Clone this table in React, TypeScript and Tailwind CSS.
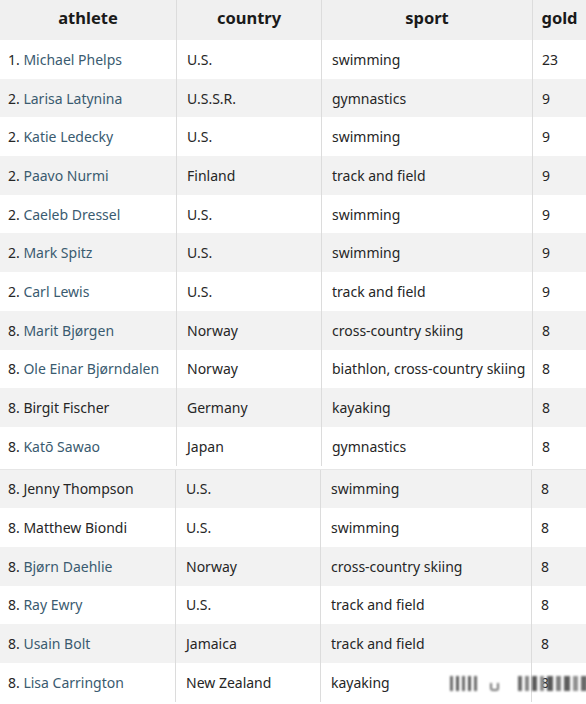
import React from 'react';

type Row = { rank: string; name: string; link: boolean; country: string; sport: string; gold: string };

const top: Row[] = [
  { rank: '1.', name: 'Michael Phelps', link: true, country: 'U.S.', sport: 'swimming', gold: '23' },
  { rank: '2.', name: 'Larisa Latynina', link: true, country: 'U.S.S.R.', sport: 'gymnastics', gold: '9' },
  { rank: '2.', name: 'Katie Ledecky', link: true, country: 'U.S.', sport: 'swimming', gold: '9' },
  { rank: '2.', name: 'Paavo Nurmi', link: true, country: 'Finland', sport: 'track and field', gold: '9' },
  { rank: '2.', name: 'Caeleb Dressel', link: true, country: 'U.S.', sport: 'swimming', gold: '9' },
  { rank: '2.', name: 'Mark Spitz', link: true, country: 'U.S.', sport: 'swimming', gold: '9' },
  { rank: '2.', name: 'Carl Lewis', link: true, country: 'U.S.', sport: 'track and field', gold: '9' },
  { rank: '8.', name: 'Marit Bjørgen', link: true, country: 'Norway', sport: 'cross-country skiing', gold: '8' },
  { rank: '8.', name: 'Ole Einar Bjørndalen', link: true, country: 'Norway', sport: 'biathlon, cross-country skiing', gold: '8' },
  { rank: '8.', name: 'Birgit Fischer', link: false, country: 'Germany', sport: 'kayaking', gold: '8' },
  { rank: '8.', name: 'Katō Sawao', link: true, country: 'Japan', sport: 'gymnastics', gold: '8' },
];

const bottom: Row[] = [
  { rank: '8.', name: 'Jenny Thompson', link: false, country: 'U.S.', sport: 'swimming', gold: '8' },
  { rank: '8.', name: 'Matthew Biondi', link: false, country: 'U.S.', sport: 'swimming', gold: '8' },
  { rank: '8.', name: 'Bjørn Daehlie', link: true, country: 'Norway', sport: 'cross-country skiing', gold: '8' },
  { rank: '8.', name: 'Ray Ewry', link: true, country: 'U.S.', sport: 'track and field', gold: '8' },
  { rank: '8.', name: 'Usain Bolt', link: true, country: 'Jamaica', sport: 'track and field', gold: '8' },
  { rank: '8.', name: 'Lisa Carrington', link: true, country: 'New Zealand', sport: 'kayaking', gold: '8' },
];

const TableRow = ({ row, shaded, shift }: { row: Row; shaded: boolean; shift?: boolean }) => (
  <div
    className={`grid h-[38.7px] items-center text-[14px] text-[#262626] ${shaded ? 'bg-[#f2f2f2]' : 'bg-white'} ${
      shift ? 'grid-cols-[175px_145px_211px_55px]' : 'grid-cols-[176px_145px_211px_54px]'
    }`}
  >
    <div className="pl-2 whitespace-nowrap">
      <span>{row.rank} </span>
      <span className={row.link ? 'text-[#3a5b70]' : ''}>{row.name}</span>
    </div>
    <div className="h-full flex items-center pl-[10px] border-l border-[#dcdcdc]">{row.country}</div>
    <div className="h-full flex items-center pl-[10px] border-l border-[#dcdcdc] whitespace-nowrap">{row.sport}</div>
    <div className="h-full flex items-center pl-[9px] border-l border-[#dcdcdc]">{row.gold}</div>
  </div>
);

export default function App() {
  return (
    <div className="relative w-[586px] h-[704px] overflow-hidden bg-white font-['Noto_Sans','Open_Sans',sans-serif]">
      <div className="grid grid-cols-[176px_145px_211px_54px] h-[40px] items-center bg-[#f0f0f0] text-[16.5px] font-bold text-[#1a1a1a]">
        <div className="pb-[3px] text-center">athlete</div>
        <div className="h-full pb-[3px] flex items-center justify-center border-l border-[#dcdcdc]">country</div>
        <div className="h-full pb-[3px] flex items-center justify-center border-l border-[#dcdcdc]">sport</div>
        <div className="h-full pb-[3px] flex items-center justify-center border-l border-[#dcdcdc]">gold</div>
      </div>
      {top.map((r, i) => (
        <TableRow key={r.name} row={r} shaded={i % 2 === 1} />
      ))}
      <div className="h-[4px] bg-white border-b border-[#e6e6e6]" />
      {bottom.map((r, i) => (
        <TableRow key={r.name} row={r} shaded={i % 2 === 0} shift />
      ))}

      {/* blurred watermark, bottom right */}
      <div className="absolute left-[450px] top-[676px] flex items-end gap-[3px] blur-[0.8px]">
        <div className="w-[3px] h-[15px] bg-[#6a6a6a]" />
        <div className="w-[3px] h-[15px] bg-[#5a5a5a]" />
        <div className="w-[3px] h-[15px] bg-[#6a6a6a]" />
        <div className="w-[3px] h-[15px] bg-[#5a5a5a]" />
        <div className="w-[3px] h-[15px] bg-[#6a6a6a]" />
        <div className="ml-[10px] w-[9px] h-[8px] border-x-2 border-b-2 border-[#777] rounded-b-[3px]" />
        <div className="ml-[16px] w-[4px] h-[15px] bg-[#6a6a6a]" />
        <div className="w-[4px] h-[15px] bg-[#858585]" />
        <div className="w-[5px] h-[15px] bg-[#5a5a5a]" />
        <div className="w-[4px] h-[15px] bg-[#8a8a8a]" />
        <div className="w-[6px] h-[15px] bg-[#585858]" />
        <div className="w-[5px] h-[15px] bg-[#808080]" />
        <div className="w-[6px] h-[15px] bg-[#5d5d5d]" />
        <div className="w-[5px] h-[15px] bg-[#909090]" />
        <div className="w-[6px] h-[15px] bg-[#696969]" />
      </div>
    </div>
  );
}
